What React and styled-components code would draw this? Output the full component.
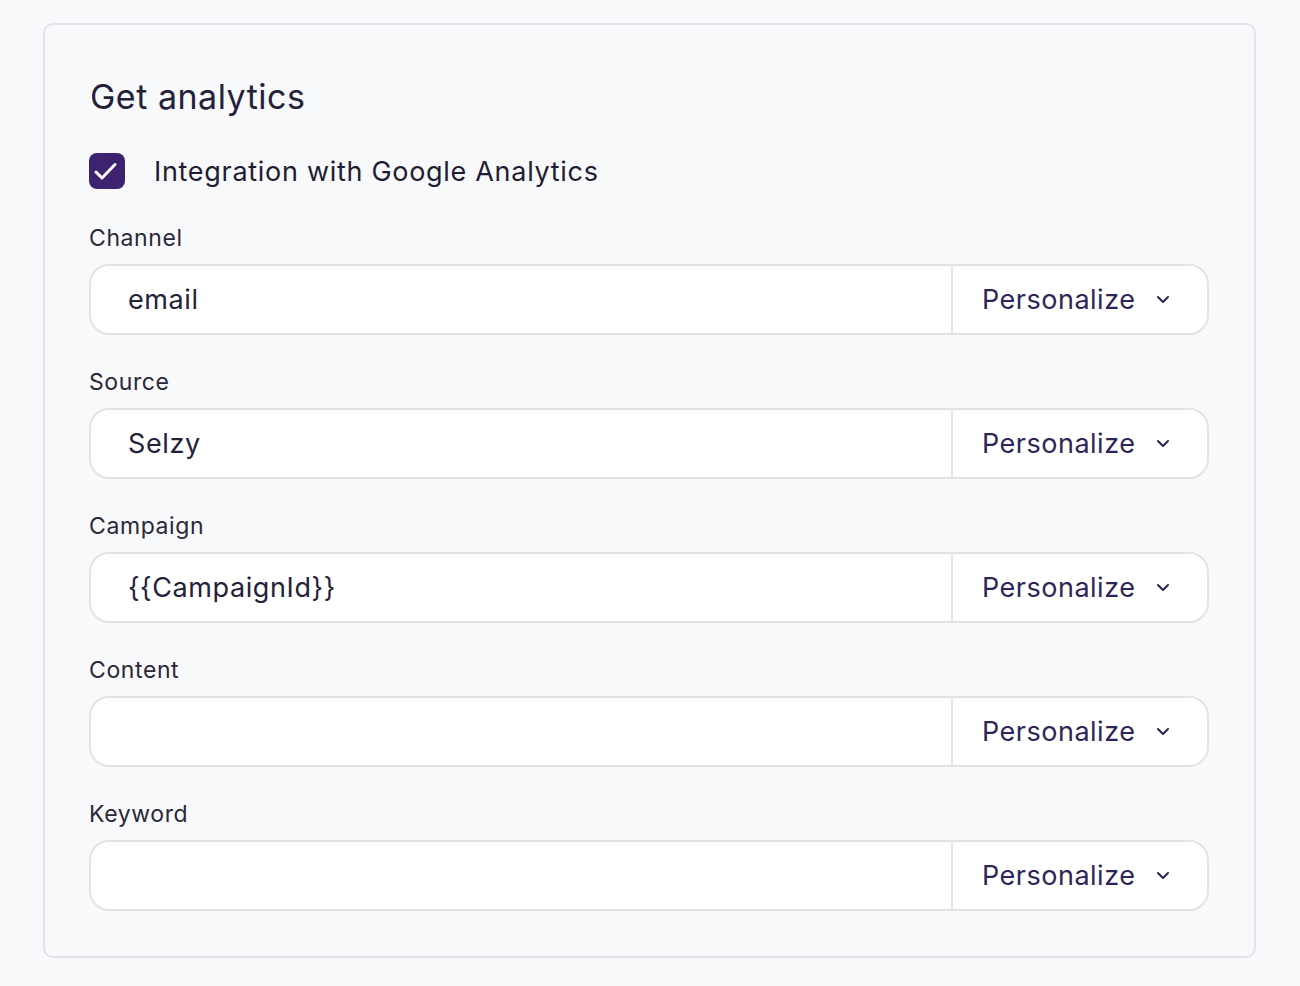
import React from "react";
import styled, { createGlobalStyle } from "styled-components";

const Global = createGlobalStyle`
  html, body { margin: 0; padding: 0; background: #f8f9fb; }
  body { font-family: "Inter", "Noto Sans", sans-serif; color: #1f1d33; }
  * { box-sizing: border-box; }
`;

const Page = styled.div`
  padding: 23px 44px 29px 43px;
`;

const Card = styled.section`
  border: 2px solid #e3e4e9;
  border-radius: 10px;
  background: #f8f9fb;
  padding: 50px 45px 45px 44px;
  min-height: 934px;
`;

const Title = styled.h2`
  margin: 0 0 0 1px;
  font-size: 34px;
  font-weight: 400;
  line-height: 44px;
  letter-spacing: 0.5px;
  color: #23223a;
`;

const CheckRow = styled.label`
  display: flex;
  align-items: center;
  gap: 29px;
  margin-top: 34px;
  font-size: 27px;
  letter-spacing: 0.7px;
  color: #1f1d33;
`;

const Box = styled.span`
  width: 36px;
  height: 36px;
  border-radius: 8px;
  background: #3d2270;
  display: inline-flex;
  flex: none;
`;

const Fields = styled.div`
  display: flex;
  flex-direction: column;
  gap: 33px;
  margin-top: 35px;
`;

const Field = styled.div`
  display: flex;
  flex-direction: column;
  gap: 12px;
`;

const Label = styled.div`
  font-size: 23px;
  line-height: 28px;
  letter-spacing: 0.6px;
  color: #2a2838;
`;

const Group = styled.div`
  display: flex;
  height: 71px;
  border: 2px solid #e2e3e7;
  border-radius: 20px;
  background: #fff;
  overflow: hidden;
`;

const Value = styled.div`
  flex: 1;
  display: flex;
  align-items: center;
  padding-left: 37px;
  font-size: 27px;
  letter-spacing: 0.6px;
  color: #23223a;
`;

const Personalize = styled.button`
  width: 256px;
  flex: none;
  border: none;
  border-left: 2px solid #e2e3e7;
  background: #fff;
  display: flex;
  align-items: center;
  padding: 0 0 0 29px;
  gap: 21px;
  font-family: inherit;
  font-size: 27px;
  letter-spacing: 0.5px;
  color: #2d2658;
  cursor: pointer;
`;

const fields = [
  { label: "Channel", value: "email" },
  { label: "Source", value: "Selzy" },
  { label: "Campaign", value: "{{CampaignId}}" },
  { label: "Content", value: "" },
  { label: "Keyword", value: "" },
];

const Chevron = () => (
  <svg width="14" height="9" viewBox="0 0 14 9" fill="none">
    <path d="M2 2l5 5 5-5" stroke="#2d2658" strokeWidth="2" strokeLinecap="round" strokeLinejoin="round" />
  </svg>
);

export default function App() {
  return (
    <Page>
      <Global />
      <Card>
        <Title>Get analytics</Title>
        <CheckRow>
          <Box>
            <svg width="36" height="36" viewBox="0 0 36 36" fill="none">
              <path d="M7 19l6 6 13-13.5" stroke="#fff" strokeWidth="3" strokeLinecap="round" strokeLinejoin="round" />
            </svg>
          </Box>
          Integration with Google Analytics
        </CheckRow>
        <Fields>
          {fields.map((f) => (
            <Field key={f.label}>
              <Label>{f.label}</Label>
              <Group>
                <Value>{f.value}</Value>
                <Personalize>
                  Personalize
                  <Chevron />
                </Personalize>
              </Group>
            </Field>
          ))}
        </Fields>
      </Card>
    </Page>
  );
}
